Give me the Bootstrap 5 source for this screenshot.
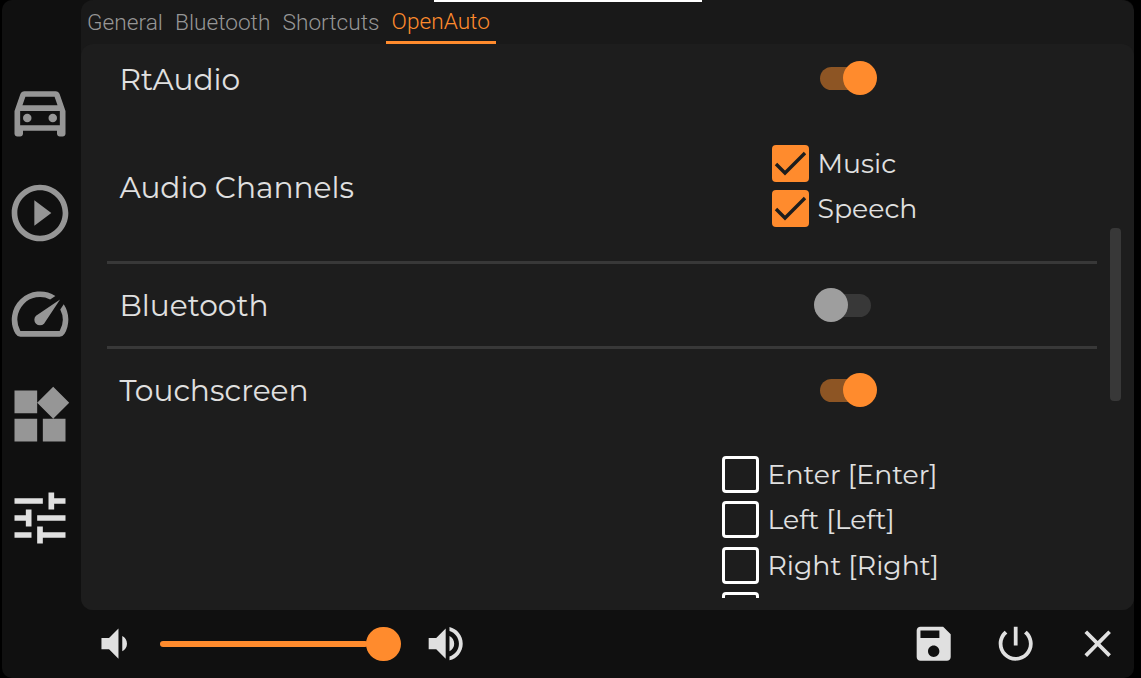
<!DOCTYPE html>
<html lang="en" data-bs-theme="dark">
<head>
<meta charset="utf-8">
<meta name="viewport" content="width=device-width, initial-scale=1">
<title>OpenAuto settings</title>
<link href="https://cdn.jsdelivr.net/npm/bootstrap@5.3.0/dist/css/bootstrap.min.css" rel="stylesheet">
<style>
  :root { --accent: #ff8b2d; --fg: #e0e0e0; --muted: #969696; }
  body { background: #000; color: var(--fg); font-family: Montserrat, Inter, sans-serif; }
  .shell { width: 1132px; height: 678px; margin-left: 2px; background: #101010; border-radius: 10px; }
  .side { width: 79px; padding: 76.7px 0 0 4.4px; gap: 33.9px; color: var(--muted); }
  .side a { height: 68px; }
  .side a.current { color: var(--fg) !important; }
  .side svg { width: 68px; height: 68px; display: block; }
  svg { fill: currentColor; }
  .panel { height: 610px; background: #191919; border-radius: 12px; }
  .tabs { height: 44px; color: #969696; font: 300 22.65px/45px Roboto, sans-serif; }
  .tabs a { padding: 0 6.1px; height: 44px; white-space: nowrap; text-decoration: none !important; }
  .tabs a.current { color: var(--accent) !important; border-bottom: 3px solid var(--accent); line-height: 43px; }
  .sheet { height: 566px; background: #1d1d1d; border-radius: 12px; padding: 0 13px 12px 26px; }
  .settings { width: 990px; height: 554px; }
  .setting { padding-left: 13px; flex: none; }
  .title { font-size: 29.7px; line-height: 36px; white-space: nowrap; text-indent: -0.6px; }
  .rule { height: 3px; background: #383838; flex: none; }
  .toggle { width: 57px; height: 34px; margin-left: 211px; display: flex; align-items: center; }
  .toggle::before { content: ""; width: 51px; height: 23px; border-radius: 12px; background: #8d5524; }
  .toggle::after { content: ""; width: 34px; height: 34px; border-radius: 50%; background: var(--accent); margin-left: -28px; flex: none; z-index: 1; }
  .toggle.off { margin-left: 205px; flex-direction: row-reverse; }
  .toggle.off::before { background: #383838; }
  .toggle.off::after { background: #9e9e9e; margin: 0 -28px 0 0; }
  .options { gap: 8.3px; }
  .option { height: 37px; gap: 9px; font-size: 26.75px; line-height: 38px; white-space: nowrap; flex: none; }
  .tick { width: 37px; height: 37px; border-radius: 4px; border: 3px solid #fff; flex: none; }
  .tick.on { background: var(--accent); border: 0; }
  .tick svg { display: block; width: 37px; height: 37px; fill: none; stroke: #1d1d1d; stroke-width: 3.4; }
  .scroller { width: 11px; height: 173px; margin-top: 184px; border-radius: 4px; background: #383838; }
  .dock { height: 68px; padding-left: 11px; }
  .dock svg { width: 45.4px; height: 45.4px; display: block; flex: none; }
  .level { width: 241px; height: 34px; }
  .level i { height: 6px; border-radius: 3px; background: var(--accent); }
  .level b { width: 35px; height: 34px; border-radius: 17px; background: var(--accent); margin-left: -2px; }
  .notch { left: 434px; top: 0; width: 268px; height: 1.5px; background: #fff; }
</style>
</head>
<body class="overflow-hidden">
<div class="notch position-absolute"></div>
<div class="shell d-flex overflow-hidden">
  <nav class="side d-flex flex-column flex-shrink-0">
    <a><svg viewBox="0 0 24 24"><path d="M18.92 6.01C18.72 5.42 18.16 5 17.5 5h-11c-.66 0-1.21.42-1.42 1.01L3 12v8c0 .55.45 1 1 1h1c.55 0 1-.45 1-1v-1h12v1c0 .55.45 1 1 1h1c.55 0 1-.45 1-1v-8l-2.08-5.99zM6.85 7h10.29l1.04 3H5.81l1.04-3zM19 17H5v-5h14v5z"/><circle cx="7.5" cy="14.5" r="1.5"/><circle cx="16.5" cy="14.5" r="1.5"/></svg></a>
    <a><svg viewBox="0 0 24 24"><path d="M10 16.5l6-4.5-6-4.5v9zM12 2C6.48 2 2 6.48 2 12s4.48 10 10 10 10-4.48 10-10S17.52 2 12 2zm0 18c-4.41 0-8-3.59-8-8s3.59-8 8-8 8 3.59 8 8-3.59 8-8 8z"/></svg></a>
    <a><svg viewBox="0 0 24 24"><path d="M20.38 8.57l-1.23 1.85a8 8 0 0 1-.22 7.58H5.07A8 8 0 0 1 15.58 6.85l1.85-1.23A10 10 0 0 0 3.35 19a2 2 0 0 0 1.72 1h13.85a2 2 0 0 0 1.74-1 10 10 0 0 0-.27-10.44zm-9.79 6.84a2 2 0 0 0 2.83 0l5.66-8.49-8.49 5.66a2 2 0 0 0 0 2.83z"/></svg></a>
    <a><svg viewBox="0 0 24 24"><path d="M13 13v8h8v-8h-8zM3 21h8v-8H3v8zM3 3v8h8V3H3zm13.66-1.31L11 7.34 16.66 13l5.66-5.66-5.66-5.66z"/></svg></a>
    <a class="current"><svg viewBox="0 0 24 24"><path d="M3 17v2h6v-2H3zM3 5v2h10V5H3zm10 16v-2h8v-2h-8v-2h-2v6h2zM7 9v2H3v2h4v2h2V9H7zm14 4v-2H11v2h10zm-6-4h2V7h4V5h-4V3h-2v6z"/></svg></a>
  </nav>
  <main class="flex-grow-1">
    <section class="panel">
      <div class="tabs d-flex">
        <a>General</a><a>Bluetooth</a><a>Shortcuts</a><a class="current">OpenAuto</a>
      </div>
      <div class="sheet d-flex justify-content-between">
        <div class="settings d-flex flex-column overflow-hidden">
          <div class="setting row g-0 align-items-center" style="height:68px">
            <div class="col-6 title" style="padding-top:2px">RtAudio</div>
            <div class="col-6"><div class="toggle"></div></div>
          </div>
          <div class="setting row g-0 align-items-center" style="height:149px">
            <div class="col-6 title">Audio Channels</div>
            <div class="col-6 d-flex flex-column options" style="padding:0 0 1px 163px">
              <div class="option d-flex"><span class="tick on"><svg viewBox="0 0 37 37"><path d="M4 19l9 9L33 8"/></svg></span><span>Music</span></div>
              <div class="option d-flex"><span class="tick on"><svg viewBox="0 0 37 37"><path d="M4 19l9 9L33 8"/></svg></span><span>Speech</span></div>
            </div>
          </div>
          <div class="rule"></div>
          <div class="setting row g-0 align-items-center" style="height:82px">
            <div class="col-6 title">Bluetooth</div>
            <div class="col-6"><div class="toggle off"></div></div>
          </div>
          <div class="rule"></div>
          <div class="setting row g-0 align-items-center" style="height:82px">
            <div class="col-6 title">Touchscreen</div>
            <div class="col-6"><div class="toggle"></div></div>
          </div>
          <div class="setting row g-0" style="padding-top:25px">
            <div class="col-6 offset-6 d-flex flex-column options" style="padding-left:113px">
              <div class="option d-flex"><span class="tick"></span><span>Enter [Enter]</span></div>
              <div class="option d-flex"><span class="tick"></span><span>Left [Left]</span></div>
              <div class="option d-flex"><span class="tick"></span><span>Right [Right]</span></div>
              <div class="option d-flex"><span class="tick"></span></div>
            </div>
          </div>
        </div>
        <div class="scroller"></div>
      </div>
    </section>
    <footer class="dock d-flex align-items-center">
      <svg viewBox="0 0 24 24"><path d="M18.5 12c0-1.77-1.02-3.29-2.5-4.03v8.05c1.48-.73 2.5-2.25 2.5-4.02zM5 9v6h4l5 5V4L9 9H5z"/></svg>
      <div class="level d-flex align-items-center" style="margin-left:23px"><i class="flex-grow-1"></i><b></b></div>
      <svg style="margin-left:22px" viewBox="0 0 24 24"><path d="M3 9v6h4l5 5V4L7 9H3zm13.5 3c0-1.77-1.02-3.29-2.5-4.03v8.05c1.48-.73 2.5-2.25 2.5-4.02zM14 3.23v2.06c2.89.86 5 3.54 5 6.71s-2.11 5.85-5 6.71v2.06c4.01-.91 7-4.49 7-8.77s-2.99-7.86-7-8.77z"/></svg>
      <div class="d-flex ms-auto" style="gap:36.6px;margin-right:14px">
        <svg viewBox="0 0 24 24"><path d="M17 3H5c-1.11 0-2 .9-2 2v14c0 1.1.89 2 2 2h14c1.1 0 2-.9 2-2V7l-4-4zm-5 16c-1.66 0-3-1.34-3-3s1.34-3 3-3 3 1.34 3 3-1.34 3-3 3zm3-10H5V5h10v4z"/></svg>
        <svg viewBox="0 0 24 24"><path d="M13 3h-2v10h2V3zm4.83 2.17l-1.42 1.42C17.99 7.86 19 9.81 19 12c0 3.87-3.13 7-7 7s-7-3.13-7-7c0-2.19 1.01-4.14 2.58-5.42L6.17 5.17C4.23 6.82 3 9.26 3 12c0 4.97 4.03 9 9 9s9-4.03 9-9c0-2.74-1.23-5.18-3.17-6.83z"/></svg>
        <svg viewBox="0 0 24 24"><path d="M19 6.41L17.59 5 12 10.59 6.41 5 5 6.41 10.59 12 5 17.59 6.41 19 12 13.41 17.59 19 19 17.59 13.41 12z"/></svg>
      </div>
    </footer>
  </main>
</div>
<script src="https://cdn.jsdelivr.net/npm/bootstrap@5.3.0/dist/js/bootstrap.bundle.min.js"></script>
</body>
</html>
